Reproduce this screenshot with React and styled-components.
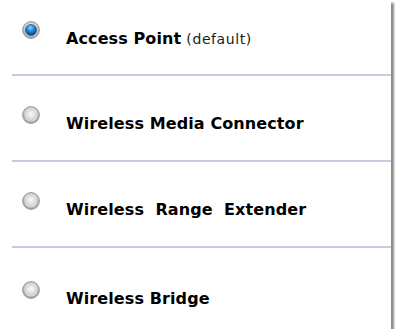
import styled, { createGlobalStyle } from "styled-components"

const GlobalStyle = createGlobalStyle`
    body{
        margin: 0;
        background: #FFFFFF;
        font-family: 'DejaVu Sans', Verdana, sans-serif;
    }
`

const modos = [
    { nome: "Access Point", extra: "(default)", selecionado: true },
    { nome: "Wireless Media Connector" },
    { nome: "Wireless  Range  Extender" },
    { nome: "Wireless Bridge" },
]

function Radio({ selecionado }) {
    return (
        <svg width="18" height="18" viewBox="0 0 18 18">
            <defs>
                <radialGradient id="anel" cx="50%" cy="35%" r="65%">
                    <stop offset="0%" stopColor="#F4F4F4" />
                    <stop offset="100%" stopColor="#9C9C9C" />
                </radialGradient>
                <radialGradient id="miolo" cx="50%" cy="40%" r="60%">
                    <stop offset="0%" stopColor="#FAFAFA" />
                    <stop offset="100%" stopColor="#D0D0D0" />
                </radialGradient>
                <radialGradient id="azul" cx="45%" cy="30%" r="70%">
                    <stop offset="0%" stopColor="#8FD4FF" />
                    <stop offset="45%" stopColor="#1E88D8" />
                    <stop offset="100%" stopColor="#0B3F78" />
                </radialGradient>
            </defs>
            <circle cx="9" cy="9" r="8.4" fill="url(#anel)" stroke="#959595" strokeWidth="0.9" />
            <circle cx="9" cy="9" r="6.3" fill="#FFFFFF" />
            <circle cx="9" cy="9" r="5.6" fill={selecionado ? "url(#azul)" : "url(#miolo)"} stroke={selecionado ? "#0A3060" : "#BDBDBD"} strokeWidth="0.6" />
        </svg>
    )
}

export default function App() {
    return (
        <>
            <GlobalStyle />
            <Painel>
                {modos.map((m, i) => (
                    <div key={m.nome}>
                        {i > 0 && <Divisor />}
                        <Linha primeira={i === 0} ultima={i === modos.length - 1}>
                            <Radio selecionado={m.selecionado} />
                            <Rotulo>
                                <b>{m.nome}</b>
                                {m.extra && <span> {m.extra}</span>}
                            </Rotulo>
                        </Linha>
                    </div>
                ))}
            </Painel>
        </>
    )
}

const Painel = styled.div`
    width: 391px;
    height: 329px;
    background: #FFFFFF;
    box-shadow: 3px 3px 2px rgba(60, 60, 60, 0.6);
    overflow: hidden;
`

const Linha = styled.div`
    display: flex;
    align-items: flex-start;
    box-sizing: border-box;
    height: ${props => props.primeira ? '74px' : '84px'};
    padding-left: 22px;
    padding-top: ${props => props.primeira ? '21px' : props.ultima ? '33px' : '30px'};
`

const Divisor = styled.div`
    height: 2px;
    margin-left: 12px;
    background: #C9C9E4;
`

const Rotulo = styled.div`
    margin-left: 26px;
    margin-top: 9px;
    white-space: pre;
    color: #000000;
    font-family: 'DejaVu Sans', Verdana, sans-serif;
    font-size: 16px;
    line-height: 18px;
    letter-spacing: 0.1px;

    b{
        font-weight: 700;
    }

    span{
        font-size: 14px;
        font-weight: 400;
        letter-spacing: 0.6px;
        color: #1A1A1A;
    }
`
